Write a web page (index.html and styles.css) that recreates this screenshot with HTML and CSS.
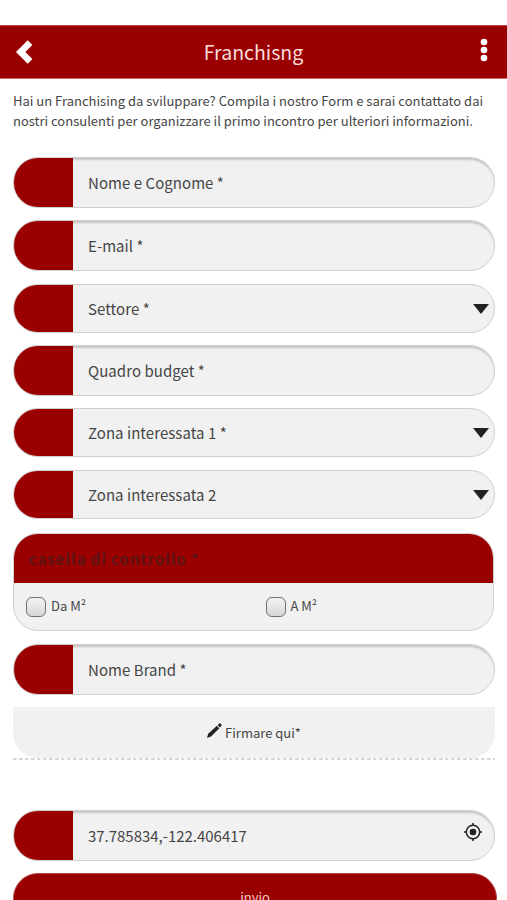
FILE: index.html
```html
<!DOCTYPE html>
<html lang="it">
<head>
<meta charset="utf-8">
<title>Franchisng</title>
<link rel="stylesheet" href="styles.css">
</head>
<body>
<header class="bar">
  <svg class="back" width="17" height="24" viewBox="0 0 17 24"><path d="M0 12 11.7.2 16.4 4.9 9.3 12l7.1 7.1-4.7 4.7z" fill="#fff"/></svg>
  <h1 class="title">Franchisng</h1>
  <svg class="more" width="8" height="24" viewBox="0 0 8 24" fill="#fff"><circle cx="4" cy="4" r="3.3"/><circle cx="4" cy="12" r="3.3"/><circle cx="4" cy="20" r="3.3"/></svg>
</header>
<main class="form">
  <p class="intro"><span class="line first">Hai un Franchising da sviluppare? Compila i nostro Form e sarai contattato dai</span><span class="line second">nostri consulenti per organizzare il primo incontro per ulteriori informazioni.</span></p>
  <div class="field input"><span class="tab"></span><span class="label">Nome e Cognome *</span></div>
  <div class="field input"><span class="tab"></span><span class="label">E-mail *</span></div>
  <div class="field select"><span class="tab"></span><span class="label">Settore *</span><span class="arrow"></span></div>
  <div class="field input"><span class="tab"></span><span class="label">Quadro budget *</span></div>
  <div class="field select"><span class="tab"></span><span class="label">Zona interessata 1 *</span><span class="arrow"></span></div>
  <div class="field select"><span class="tab"></span><span class="label">Zona interessata 2</span><span class="arrow"></span></div>
  <section class="checks">
    <h2 class="legend">casella di controllo *</h2>
    <div class="options">
      <div class="option"><span class="box"></span><span class="unit">Da M²</span></div>
      <div class="option"><span class="box"></span><span class="unit">A M²</span></div>
    </div>
  </section>
  <div class="field input"><span class="tab"></span><span class="label">Nome Brand *</span></div>
  <div class="sign">
    <div class="pad">
      <svg class="pencil" width="15" height="15" viewBox="0 0 15 15" fill="#222"><path d="M0 15l1.2-4.2L9.9 2.7l2.4 2.5-8.3 8.3z"/><path d="M10.7 2 12.2.6q.6-.5 1.2 0l1 1q.6.6 0 1.2L13 4.4z"/></svg>
      <span>Firmare qui*</span>
    </div>
    <svg class="dashes" width="482" height="2"><path d="M0 1H482" stroke="#c9c9c9" stroke-width="1.3" stroke-dasharray="3.6 2.4"/></svg>
  </div>
  <div class="field input"><span class="tab"></span><span class="label number">37.785834,-122.406417</span>
    <svg class="locate" width="18" height="18" viewBox="0 0 18 18"><circle cx="9" cy="9" r="6.7" fill="none" stroke="#222" stroke-width="1.5"/><circle cx="9" cy="9" r="3.3" fill="#222"/><path d="M9 0v3M9 15v3M0 9h3M15 9h3" stroke="#222" stroke-width="1.6"/></svg>
  </div>
  <div class="submit">invio</div>
</main>
</body>
</html>
```
FILE: styles.css
```css
* { box-sizing: border-box; }
body {
  margin: 0;
  height: 900px;
  overflow: hidden;
  background: #fff;
  color: #454545;
  font-family: "Noto Sans CJK SC", "Noto Sans", sans-serif;
  font-size: 15px;
}
.bar {
  margin-top: 25px;
  height: 54px;
  padding: 0 19px 0 16px;
  display: flex;
  align-items: center;
  justify-content: space-between;
  background: #9b0000;
  border-top: 1px solid #bc4545;
  border-bottom: 1px solid #d06a6a;
}
.title { margin: 0 6px 0 0; font-size: 19.5px; font-weight: 400; line-height: 30px; color: #f8dede; }
.back { margin-bottom: 1px; }
.more { margin-bottom: 4px; }
.form { padding: 12px 12px 0 13px; display: flex; flex-direction: column; align-items: flex-start; }
.intro { margin: 0 0 27px; font-size: 13px; line-height: 19.5px; }
.line { display: block; white-space: nowrap; }
.first { letter-spacing: 0.01px; }
.field {
  width: 482px;
  display: flex;
  align-items: center;
  border: 1px solid #cfcfcf;
  border-radius: 25px;
  background: #f1f1f1;
  overflow: hidden;
}
.input { height: 51px; margin-bottom: 12.4px; box-shadow: inset 0 3px 2px -1px #c4c4c4; }
.select { height: 49px; margin-bottom: 12.2px; }
.tab { width: 59px; align-self: stretch; background: #9b0000; }
.label { margin-left: 15px; white-space: nowrap; letter-spacing: 0.05px; }
.number { letter-spacing: -0.02px; }
.arrow {
  margin: 1px 5px 0 auto;
  border: 8.5px solid transparent;
  border-top: 10px solid #222;
  border-bottom: 0;
}
.checks {
  width: 481px;
  height: 98px;
  margin: 2.2px 0 12.8px;
  border: 1px solid #cfcfcf;
  border-radius: 25px;
  background: #f1f1f1;
  overflow: hidden;
}
.legend {
  margin: 0;
  height: 49px;
  padding-left: 15px;
  background: #9b0000;
  color: #5a1414;
  font-size: 15px;
  font-weight: 700;
  line-height: 49px;
  letter-spacing: 0.92px;
}
.options { display: grid; grid-template-columns: 239.5px 1fr; padding: 14px 0 0 12px; }
.option { display: flex; align-items: center; gap: 5px; height: 20px; font-size: 13px; }
.unit { margin-top: -2px; }
.box {
  width: 20px;
  height: 20px;
  border: 1.5px solid #707070;
  border-radius: 6px;
  background: linear-gradient(#f4f4f4, #d6d6d6);
}
.sign { width: 482px; height: 53px; margin-bottom: 49.4px; }
.pad {
  height: 51px;
  display: flex;
  align-items: center;
  justify-content: center;
  gap: 3px;
  background: #f1f1f1;
  border-radius: 0 0 25px 25px;
  font-size: 13px;
}
.pencil { margin-top: -4px; }
.dashes { display: block; }
.locate { margin: -6px 12px 0 auto; }
.submit {
  width: 484px;
  height: 50px;
  border: 1px solid #b84848;
  border-radius: 25px;
  background: #9b0000;
  color: #f3caca;
  text-align: center;
  font-size: 13px;
  line-height: 46px;
}
```
